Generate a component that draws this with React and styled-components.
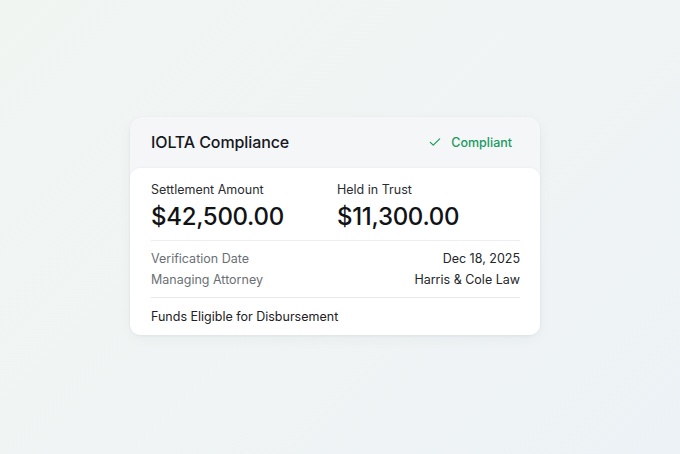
import React from "react";
import styled, { createGlobalStyle } from "styled-components";

const GlobalStyle = createGlobalStyle`
  html, body {
    margin: 0;
    padding: 0;
  }
  body {
    font-family: Inter, "Noto Sans", sans-serif;
    -webkit-font-smoothing: antialiased;
  }
`;

const details = [
  { label: "Verification Date", value: "Dec 18, 2025" },
  { label: "Managing Attorney", value: "Harris & Cole Law" },
];

const amounts = [
  { label: "Settlement Amount", value: "$42,500.00" },
  { label: "Held in Trust", value: "$11,300.00" },
];

const App = () => {
  return (
    <>
      <GlobalStyle />
      <Page>
        <Card>
          <Header>
            <Title>IOLTA Compliance</Title>
            <Status>
              <svg width="14" height="14" viewBox="0 0 24 24" fill="none">
                <path
                  d="M4 12.5l5 5L20 6.5"
                  stroke="currentColor"
                  strokeWidth="2"
                  strokeLinecap="round"
                  strokeLinejoin="round"
                />
              </svg>
              <span>Compliant</span>
            </Status>
          </Header>

          <Panel>
            <Amounts>
              {amounts.map((a) => (
                <div key={a.label}>
                  <AmountLabel>{a.label}</AmountLabel>
                  <Amount>{a.value}</Amount>
                </div>
              ))}
            </Amounts>

            <Details>
              {details.map((d) => (
                <DetailRow key={d.label}>
                  <DetailLabel>{d.label}</DetailLabel>
                  <DetailValue>{d.value}</DetailValue>
                </DetailRow>
              ))}
            </Details>

            <Footer>Funds Eligible for Disbursement</Footer>
          </Panel>
        </Card>
      </Page>
    </>
  );
};

export default App;

const Page = styled.div`
  height: 454px;
  display: flex;
  align-items: center;
  justify-content: center;
  padding: 0 10px 2px 0;
  box-sizing: border-box;
  background: linear-gradient(135deg, #f1f5f2 0%, #f0f4f4 50%, #edf2f6 100%);
`;

const Card = styled.div`
  width: 410px;
  background: #f4f6f8;
  border-radius: 12px;
  box-shadow: 0 1px 3px rgba(30, 40, 50, 0.06), 0 4px 14px rgba(30, 40, 50, 0.04);
  display: flex;
  flex-direction: column;
`;

const Header = styled.div`
  height: 50px;
  padding: 0 28px 1px 21px;
  display: flex;
  align-items: center;
  justify-content: space-between;
`;

const Title = styled.h2`
  margin: 0;
  font-size: 16px;
  font-weight: 500;
  color: #16181c;
  letter-spacing: -0.1px;
`;

const Status = styled.div`
  display: flex;
  align-items: center;
  gap: 9px;
  color: #1a9a5e;
  font-size: 12.5px;
  font-weight: 500;
`;

const Panel = styled.div`
  background: #ffffff;
  border-radius: 10px;
  padding: 14px 20px 0 21px;
  box-shadow: 0 -1px 2px rgba(30, 40, 50, 0.03);
`;

const Amounts = styled.div`
  display: grid;
  grid-template-columns: 186px auto;
  padding-bottom: 8px;
  border-bottom: 1px solid #eceef0;
`;

const AmountLabel = styled.div`
  font-size: 12.5px;
  color: #2a2d31;
  line-height: 16px;
`;

const Amount = styled.div`
  margin-top: 4px;
  font-size: 24px;
  font-weight: 500;
  color: #111316;
  letter-spacing: -0.3px;
  line-height: 30px;
`;

const Details = styled.div`
  padding: 10px 0 9px;
  display: flex;
  flex-direction: column;
  gap: 5px;
  border-bottom: 1px solid #e6e8ea;
`;

const DetailRow = styled.div`
  display: flex;
  justify-content: space-between;
  align-items: center;
  font-size: 12.5px;
  line-height: 16px;
`;

const DetailLabel = styled.span`
  color: #6b6f75;
`;

const DetailValue = styled.span`
  color: #23262a;
`;

const Footer = styled.div`
  padding: 11px 0 10px;
  font-size: 12.5px;
  line-height: 16px;
  color: #1e2125;
`;
